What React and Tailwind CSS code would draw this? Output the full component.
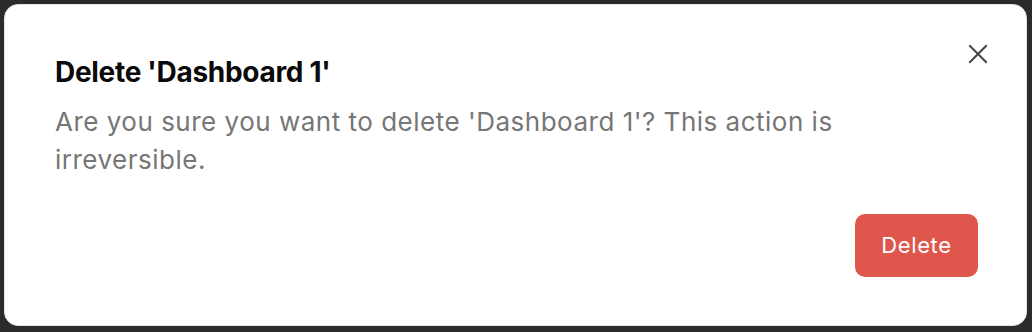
import React from "react";

export default function App() {
  return (
    <div className="w-[1032px] h-[332px] bg-[#2b2b2b] pt-[4px] pl-[4px]" style={{ fontFamily: "Inter, 'Liberation Sans', sans-serif" }}>
      <div className="relative w-[1023px] h-[322px] bg-white rounded-[14px] border border-[#e4e4e4] py-12 pl-[50px] pr-12 flex flex-col">
        <button className="absolute top-[39px] right-[38px] text-[#454545]" aria-label="Close">
          <svg width="20" height="20" viewBox="0 0 20 20" fill="none" stroke="currentColor" strokeWidth="2" strokeLinecap="square">
            <path d="M2 2L18 18M18 2L2 18" />
          </svg>
        </button>
        <h2 className="text-[28px] font-bold leading-[38px] tracking-[-0.3px] text-[#0a0a0a]">Delete 'Dashboard 1'</h2>
        <p className="mt-[12px] max-w-[870px] text-[26px] leading-[38px] tracking-[0.5px] text-[#767676]">
          Are you sure you want to delete 'Dashboard 1'? This action is irreversible.
        </p>
        <div className="mt-auto flex justify-end">
          <button className="h-[63px] w-[123px] rounded-[10px] bg-[#df574c] text-white text-[22px] tracking-[0.6px]">Delete</button>
        </div>
      </div>
    </div>
  );
}
